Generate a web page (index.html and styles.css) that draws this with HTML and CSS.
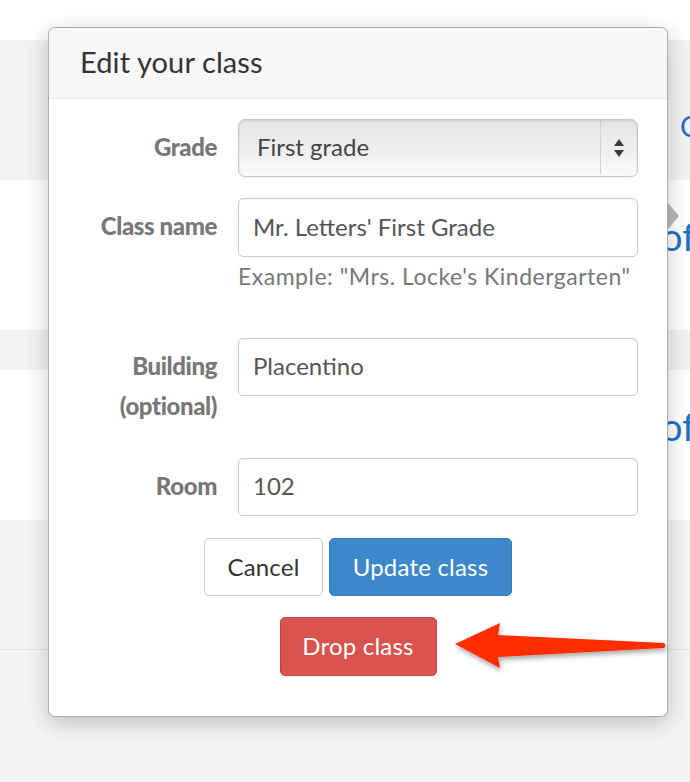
FILE: index.html
```html
<!DOCTYPE html>
<html>
<head>
<meta charset="utf-8">
<link rel="stylesheet" href="styles.css">
</head>
<body>
<div class="page">
  <div class="band-top"></div>
  <div class="band band-head"><span class="link link-c">Class</span></div>
  <div class="band band-row"><span class="link link-of">Proof</span></div>
  <div class="band band-sep"></div>
  <div class="band band-row"><span class="link link-of">Proof</span></div>
  <div class="band band-foot"></div>
</div>

<div class="pop-arrow"></div>

<div class="popover">
  <div class="popover-header">
    <h3 class="popover-title">Edit your class</h3>
  </div>
  <form class="popover-body">
    <div class="form-group group-grade">
      <label class="control-label">Grade</label>
      <div class="select-wrap">
        <div class="select-control">First grade</div>
        <div class="select-arrows">
          <svg width="12" height="22" viewBox="0 0 12 22"><path d="M6 2 L11 9 L1 9 Z M6 20 L11 13 L1 13 Z" fill="#3a3a3a"/></svg>
        </div>
      </div>
    </div>
    <div class="form-group group-name">
      <label class="control-label">Class name</label>
      <div>
        <div class="form-control">Mr. Letters' First Grade</div>
        <p class="help-block">Example: "Mrs. Locke's Kindergarten"</p>
      </div>
    </div>
    <div class="form-group group-building">
      <label class="control-label">Building<br>(optional)</label>
      <div class="form-control">Placentino</div>
    </div>
    <div class="form-group group-room">
      <label class="control-label">Room</label>
      <div class="form-control">102</div>
    </div>
    <div class="actions">
      <button type="button" class="btn btn-default">Cancel</button>
      <button type="button" class="btn btn-primary">Update class</button>
    </div>
    <div class="actions actions-drop">
      <button type="button" class="btn btn-danger">Drop class</button>
    </div>
  </form>
</div>

<svg class="red-arrow" width="240" height="80" viewBox="0 0 240 80">
  <defs>
    <filter id="sh" x="-20%" y="-40%" width="140%" height="180%">
      <feDropShadow dx="1" dy="3" stdDeviation="2.5" flood-color="#000" flood-opacity="0.35"/>
    </filter>
  </defs>
  <path d="M15 34 L60 13 L58 25 L224 33 Q227 35.5 224 38 L58 47 L60 58 Z" fill="#ff2d00" filter="url(#sh)"/>
</svg>
</body>
</html>
```

FILE: styles.css
```css
* { box-sizing: border-box; }
html, body { margin: 0; padding: 0; }
body {
  width: 690px;
  height: 782px;
  overflow: hidden;
  background: #f4f4f4;
  font-family: Lato, "Open Sans", sans-serif;
  position: relative;
}
.page { width: 690px; }
.band-top { height: 40px; background: #fff; }
.band { overflow: hidden; white-space: nowrap; }
.band-head { height: 140px; background: #f2f2f2; padding-top: 66px; }
.band-row { height: 150px; background: #fff; padding-top: 36px; }
.band-sep { height: 40px; background: #f2f2f2; }
.band-foot { height: 130px; background: #f4f4f4; border-bottom: 1px solid #e2e2e2; }
.link { color: #1d6fc4; display: block; line-height: 40px; }
.link-c { font-size: 28px; padding-left: 680px; }
.link-of { font-size: 38px; padding-left: 604px; }

.pop-arrow {
  position: absolute;
  left: 668px;
  top: 203px;
  width: 0;
  height: 0;
  border-top: 13px solid transparent;
  border-bottom: 13px solid transparent;
  border-left: 11px solid rgba(0,0,0,0.28);
}

.popover {
  position: absolute;
  left: 48px;
  top: 27px;
  width: 620px;
  height: 690px;
  background: #fff;
  border: 1px solid rgba(0,0,0,0.32);
  border-radius: 7px;
  box-shadow: 0 6px 22px rgba(0,0,0,0.22);
  overflow: hidden;
}
.popover-header {
  height: 71px;
  background: #f7f7f7;
  border-bottom: 1px solid #e8e8e8;
  padding-left: 31px;
}
.popover-title {
  margin: 0;
  font-weight: 400;
  font-size: 29px;
  line-height: 68px;
  color: #333;
  letter-spacing: 0.1px;
}
.popover-body {
  padding: 20px 29px 0 0;
  margin: 0;
}
.form-group {
  display: grid;
  grid-template-columns: 168px 400px;
  column-gap: 21px;
  align-items: start;
}
.group-grade { margin-bottom: 21px; }
.group-name { margin-bottom: 47px; }
.group-building { margin-bottom: 32px; }
.group-room { margin-bottom: 22px; }
.control-label {
  text-align: right;
  font-weight: 900;
  font-size: 24px;
  line-height: 40px;
  padding-top: 8px;
  color: #777;
  letter-spacing: -0.4px;
}
.form-control {
  height: 58px;
  border: 1px solid #ccc;
  border-radius: 5px;
  padding-left: 14px;
  font-size: 24px;
  line-height: 54px;
  color: #555;
  box-shadow: inset 0 1px 1px rgba(0,0,0,0.05);
}
.group-name .form-control { height: 59px; line-height: 55px; }
.help-block {
  margin: 4px 0 0;
  font-size: 23px;
  letter-spacing: 0.5px;
  line-height: 30px;
  color: #777;
  white-space: nowrap;
}
.select-wrap {
  position: relative;
  height: 58px;
  border: 1px solid #c6c6c6;
  border-radius: 7px;
  background: linear-gradient(#e4e4e4, #f0f0f0 60%, #fbfbfb);
  box-shadow: inset 0 1px 2px rgba(0,0,0,0.12), 0 1px 1px rgba(0,0,0,0.06);
  display: flex;
}
.select-control {
  flex: 1;
  padding-left: 18px;
  font-size: 24px;
  line-height: 54px;
  color: #444;
}
.select-arrows {
  width: 37px;
  border-left: 1px solid #d2d2d2;
  margin: 1px 0 2px;
  display: flex;
  align-items: center;
  justify-content: center;
}
.actions {
  display: flex;
  justify-content: center;
  gap: 6px;
  padding-left: 29px;
}
.actions-drop { margin-top: 21px; }
.btn {
  height: 58px;
  font-family: inherit;
  font-size: 24px;
  letter-spacing: 0.2px;
  border-radius: 5px;
  padding: 0 0 2px;
  border: 1px solid transparent;
  cursor: pointer;
}
.btn-default { background: #fff; border-color: #ccc; color: #333; width: 119px; }
.btn-primary { background: #3d88ca; border-color: #357ebd; color: #fff; width: 183px; }
.btn-danger { background: #d9534f; border-color: #c9433f; color: #fff; width: 157px; height: 59px; }

.red-arrow {
  position: absolute;
  left: 440px;
  top: 610px;
}
```
